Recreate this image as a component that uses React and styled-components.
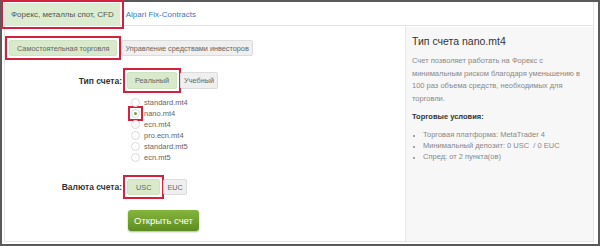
import { useState } from "react";
import styled, { createGlobalStyle } from "styled-components";

const GlobalStyle = createGlobalStyle`
  html, body {
    margin: 0;
    padding: 0;
    background: #fff;
  }
  body {
    font-family: "Liberation Sans", Arial, sans-serif;
  }
`;

const accounts = [
  "standard.mt4",
  "nano.mt4",
  "ecn.mt4",
  "pro.ecn.mt4",
  "standard.mt5",
  "ecn.mt5",
];

const App = () => {
  const [mode, setMode] = useState("self");
  const [kind, setKind] = useState("real");
  const [account, setAccount] = useState("nano.mt4");
  const [currency, setCurrency] = useState("USC");

  return (
    <>
      <GlobalStyle />
      <Frame>
        <Inner>
          <TabBar>
            <Mark>
              <Tab $active>Форекс, металлы спот, CFD</Tab>
            </Mark>
            <TabLink>Alpari Fix-Contracts</TabLink>
          </TabBar>
          <Body>
            <FormColumn>
              <ModeRow>
                <Mark>
                  <Toggle $active={mode === "self"} onClick={() => setMode("self")}>
                    Самостоятельная торговля
                  </Toggle>
                </Mark>
                <Toggle $active={mode === "invest"} onClick={() => setMode("invest")}>
                  Управление средствами инвесторов
                </Toggle>
              </ModeRow>

              <FieldRow>
                <Label>Тип счета:</Label>
                <Group>
                  <Mark>
                    <Toggle $active={kind === "real"} $tall onClick={() => setKind("real")}>
                      Реальный
                    </Toggle>
                  </Mark>
                  <Toggle $active={kind === "demo"} $tall onClick={() => setKind("demo")}>
                    Учебный
                  </Toggle>
                </Group>
              </FieldRow>

              <RadioList>
                {accounts.map((name) => (
                  <RadioItem key={name} onClick={() => setAccount(name)}>
                    {account === name ? (
                      <Mark $tight>
                        <Radio $checked />
                      </Mark>
                    ) : (
                      <Radio />
                    )}
                    <RadioText>{name}</RadioText>
                  </RadioItem>
                ))}
              </RadioList>

              <FieldRow>
                <Label>Валюта счета:</Label>
                <Group>
                  <Mark>
                    <Toggle
                      $active={currency === "USC"}
                      $wide
                      onClick={() => setCurrency("USC")}
                    >
                      USC
                    </Toggle>
                  </Mark>
                  <Toggle $active={currency === "EUC"} onClick={() => setCurrency("EUC")}>
                    EUC
                  </Toggle>
                </Group>
              </FieldRow>

              <SubmitRow>
                <OpenButton>Открыть счет</OpenButton>
              </SubmitRow>
            </FormColumn>

            <InfoPanel>
              <InfoTitle>Тип счета {account}</InfoTitle>
              <InfoText>
                Счет позволяет работать на Форекс с минимальным риском благодаря
                уменьшению в 100 раз объема средств, необходимых для торговли.
              </InfoText>
              <InfoHeading>Торговые условия:</InfoHeading>
              <Terms>
                <li>Торговая платформа: MetaTrader 4</li>
                <li>Минимальный депозит: 0 USC&nbsp; / 0 EUC</li>
                <li>Спред: от 2 пункта(ов)</li>
              </Terms>
            </InfoPanel>
          </Body>
        </Inner>
      </Frame>
    </>
  );
};

// red annotation box drawn around highlighted controls
const Mark = styled.span`
  display: inline-flex;
  outline: 2px solid #d3213e;
  outline-offset: ${(p) => (p.$tight ? "1px" : "2px")};
`;

const Frame = styled.div`
  width: 600px;
  height: 246px;
  box-sizing: border-box;
  border: 2px solid #5a5a5a;
  display: flex;
  background: #fff;
`;

const Inner = styled.div`
  flex: 1;
  margin: 0 4px 2px 2px;
  border: 1px solid #e6e6e6;
  border-top: none;
  display: flex;
  flex-direction: column;
`;

const TabBar = styled.div`
  height: 24px;
  box-sizing: border-box;
  border-bottom: 1px solid #e4e5d3;
  display: flex;
  align-items: stretch;
  padding-top: 1px;
`;

const Tab = styled.div`
  height: 23px;
  margin-bottom: -1px;
  padding: 0 6px;
  display: flex;
  align-items: center;
  font-size: 8px;
  color: #555;
  background: ${(p) => (p.$active ? "#dcecd1" : "transparent")};
`;

const TabLink = styled.a`
  display: flex;
  align-items: center;
  padding: 0 6px;
  font-size: 8px;
  color: #3a78c4;
  cursor: pointer;
`;

const Body = styled.div`
  flex: 1;
  display: flex;
  min-height: 0;
`;

const FormColumn = styled.div`
  width: 400px;
  display: flex;
  flex-direction: column;
`;

const ModeRow = styled.div`
  display: flex;
  gap: 4px;
  margin-top: 14px;
  padding-left: 4px;
`;

const Toggle = styled.button`
  font-family: "Liberation Sans", Arial, sans-serif;
  font-size: 7.3px;
  color: #666;
  height: ${(p) => (p.$tall ? "17px" : "16px")};
  padding: 0 ${(p) => (p.$active ? (p.$wide ? "8px" : "7px") : "3px")};
  border-radius: 2px;
  border: 1px solid ${(p) => (p.$active ? "#cfe2c2" : "#dcdcdc")};
  background: ${(p) => (p.$active ? "#d8eacb" : "#efefef")};
  cursor: pointer;
`;

const FieldRow = styled.div`
  display: flex;
  align-items: center;
  gap: 5px;
  margin-top: 16px;
`;

const Label = styled.div`
  width: 117px;
  text-align: right;
  font-size: 8.5px;
  font-weight: bold;
  color: #333;
`;

const Group = styled.div`
  display: flex;
  gap: 3px;
`;

const RadioList = styled.div`
  display: flex;
  flex-direction: column;
  margin-top: 8px;
  padding-left: 126px;
`;

const RadioItem = styled.label`
  height: 11px;
  display: flex;
  align-items: center;
  gap: 4px;
  cursor: pointer;
`;

const Radio = styled.span`
  width: 7px;
  height: 7px;
  border-radius: 50%;
  border: 1px solid #dadada;
  background: #fff;
  position: relative;

  &::after {
    content: "";
    position: absolute;
    left: 2px;
    top: 2px;
    width: 3px;
    height: 3px;
    border-radius: 50%;
    background: ${(p) => (p.$checked ? "#6aa43a" : "transparent")};
  }
`;

const RadioText = styled.span`
  font-size: 7.5px;
  color: #666;
`;

const SubmitRow = styled.div`
  margin-top: 15px;
  padding-left: 123px;
`;

const OpenButton = styled.button`
  width: 71px;
  height: 21px;
  border: none;
  border-radius: 3px;
  background: linear-gradient(#86b53c, #5e8d20);
  box-shadow: 0 1px 2px rgba(0, 0, 0, 0.3);
  color: #fff;
  font-family: "Liberation Sans", Arial, sans-serif;
  font-size: 9.5px;
  cursor: pointer;
`;

const InfoPanel = styled.div`
  flex: 1;
  margin-top: 1px;
  border-left: 1px solid #e6e6e6;
  background: #f7f7f7;
  padding: 8px 6px 0 6px;
  color: #888;
`;

const InfoTitle = styled.div`
  font-size: 10.5px;
  line-height: 13px;
  color: #333;
`;

const InfoText = styled.p`
  margin: 7px 0 0;
  font-size: 7.5px;
  line-height: 12.5px;
`;

const InfoHeading = styled.div`
  margin-top: 6px;
  font-size: 7.5px;
  line-height: 12px;
  font-weight: bold;
  color: #333;
`;

const Terms = styled.ul`
  margin: 6px 0 0;
  padding-left: 11px;
  font-size: 7.5px;
  line-height: 11px;

  li::marker {
    font-size: 6px;
  }
`;

export default App;
